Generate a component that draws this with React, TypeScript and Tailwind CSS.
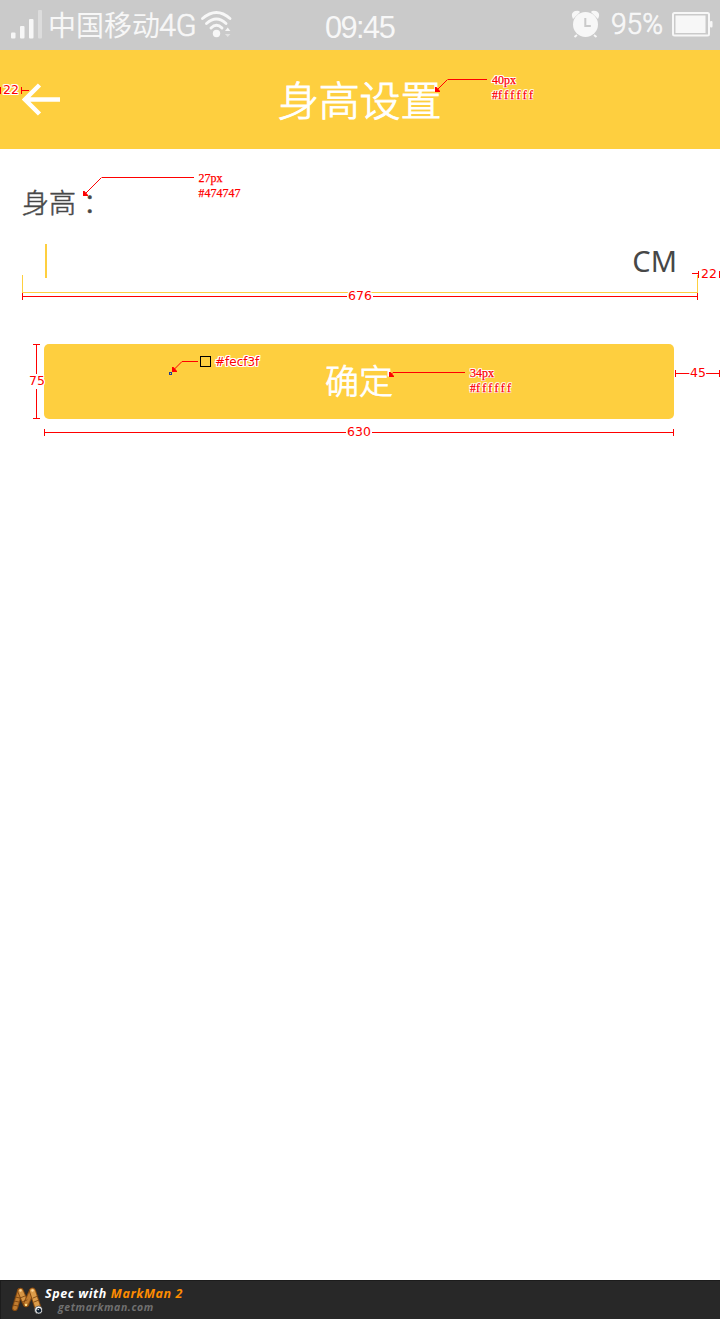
import type { ReactNode } from "react";

const CJK = "font-['Noto_Sans_CJK_SC',sans-serif]";
const HALO =
  "[text-shadow:1px_0_#fff,-1px_0_#fff,0_1px_#fff,0_-1px_#fff,1px_1px_#fff,-1px_-1px_#fff,1px_-1px_#fff,-1px_1px_#fff]";

function Measure({ className, children }: { className: string; children: ReactNode }) {
  return (
    <span className={`absolute whitespace-nowrap font-['DejaVu_Sans',sans-serif] leading-[14px] text-[#f00] ${HALO} ${className}`}>
      {children}
    </span>
  );
}

function FontNote({ className, size, color, colorClass = "" }: { className: string; size: string; color: string; colorClass?: string }) {
  return (
    <div className={`absolute whitespace-nowrap font-['Liberation_Serif',serif] text-[12px] leading-[15px] text-[#f00] [-webkit-text-stroke:0.25px_#f00] ${HALO} ${className}`}>
      <div>{size}</div>
      <div>
        #<span className={colorClass}>{color}</span>
      </div>
    </div>
  );
}

function StatusBar() {
  return (
    <div className="flex h-[50px] items-start bg-[#cacaca] text-[#f7f7f7]">
      <svg width="48" height="50" viewBox="0 0 48 50" fill="#f7f7f7">
        <rect x="11" y="32.500" width="4.500" height="6" rx="1" />
        <rect x="20" y="26" width="4.500" height="12.500" rx="1" />
        <rect x="29" y="19" width="4.500" height="19.500" rx="1" />
        <rect x="38" y="10" width="4" height="28.500" rx="1" fill="#dcdcdc" />
      </svg>
      <span className={`${CJK} w-[111px] whitespace-nowrap text-[28px] leading-[48px]`}>中国移动</span>
      <span className="w-[41px] origin-left scale-x-[0.95] font-['Roboto',sans-serif] text-[32px] font-light leading-[51px] [-webkit-text-stroke:0.7px_#f7f7f7]">4G</span>
      <svg width="34" height="50" viewBox="200 0 34 50" fill="none" stroke="#f7f7f7" strokeWidth="2.900" strokeLinecap="round">
        <path d="M202.500 18.500Q216.500 6.500 230 18.500M206.500 23.500Q216.500 14.500 226 23.500M211 28Q216.500 22.500 222 28" />
        <circle cx="216.500" cy="33.500" r="3.700" fill="#f7f7f7" stroke="none" />
        <path d="M225 31l2.700-3.500 2.700 3.500z" fill="#f7f7f7" stroke="none" />
        <path d="M225 34l2.700 3 2.700-3z" fill="#e2e2e2" stroke="none" />
      </svg>
      <span className="ml-[91px] w-[245px] origin-left scale-x-[0.96] font-['Liberation_Sans',sans-serif] text-[32px] leading-[54px] tracking-[-1.600px]">
        09:45
      </span>
      <svg width="30" height="50" viewBox="570 0 30 50">
        <path d="M573 19q-3-6 2-8 4-1 5 1zM598 19q3-6-2-8-4-1-5 1z" fill="#f7f7f7" />
        <circle cx="585.500" cy="24.500" r="12.500" fill="#f7f7f7" />
        <path d="M577 35l-2.500 2M594 35l2.500 2" stroke="#f7f7f7" strokeWidth="2" />
        <path d="M585.300 18v8h5.500" fill="none" stroke="#cacaca" strokeWidth="2" />
      </svg>
      <span className="ml-[11px] w-[60px] origin-left scale-x-[0.97] font-['Roboto',sans-serif] text-[29px] font-light leading-[49px] [-webkit-text-stroke:0.7px_#f7f7f7]">95%</span>
      <svg width="44" height="50" viewBox="671 0 44 50">
        <rect x="673" y="13" width="36" height="22.500" rx="1.500" fill="none" stroke="#f7f7f7" strokeWidth="2" />
        <rect x="675.500" y="15.500" width="30" height="17.500" fill="#f7f7f7" />
        <rect x="710" y="21" width="2.500" height="6.500" rx="1" fill="#f7f7f7" />
      </svg>
    </div>
  );
}

function Annotations() {
  return (
    <div className="pointer-events-none absolute inset-0">
      <svg className="absolute inset-0" width="720" height="450" viewBox="0 0 720 450" fill="none" stroke="#f00" strokeWidth="1">
        <g shapeRendering="crispEdges">
          <path d="M.5 87v7M21.500 87v7M22 90.500h7" />
          <path d="M447.500 79.500H487M101.500 177.500H194M692 273.500h6M698.500 271v7M719.500 271v7" />
          <path d="M22.500 293v7M697.500 293v7M23 296.500h324M373 296.500h325" />
          <path d="M33 344.500h7M33 418.500h7M36.500 345v29M36.500 389v29" />
          <path d="M44.500 429v7M673.500 429v7M45 432.500h301M372 432.500h301" />
          <path d="M675.500 370v7M719.500 370v7M676 373.500h14M706 373.500h13" />
          <path d="M393 372.500h72M182 361.500h16" />
        </g>
        <path d="M447.500 79.500L438 89M101.500 177.500L86 193M182 361.500L174 369.500M393 372.500l-2 2" />
        <g fill="#f00" stroke="none">
          <path d="M435 87h1.500l3.500 4v1h-5zM83 191h1.500l3.500 4v1h-5zM172 367h1.500l3.500 4v1h-5zM389 372h1.500l3.500 4v1h-5z" />
        </g>
        <rect x="169.500" y="372.500" width="2" height="2" stroke="#1e3c96" shapeRendering="crispEdges" />
        <rect x="200.500" y="356.500" width="10" height="10" stroke="#000" shapeRendering="crispEdges" />
      </svg>
      <Measure className="left-[3px] top-[83px] text-[12.500px]">22</Measure>
      <Measure className="left-[701px] top-[267px] text-[12.500px]">22</Measure>
      <Measure className="left-[348px] top-[289px] text-[12.500px]">676</Measure>
      <Measure className="left-[29px] top-[374px] text-[12.500px]">75</Measure>
      <Measure className="left-[347px] top-[425px] text-[12.500px]">630</Measure>
      <Measure className="left-[690px] top-[366px] text-[12.500px]">45</Measure>
      <Measure className="left-[215px] top-[355px] text-[12px]">#fecf3f</Measure>
      <FontNote className="left-[492px] top-[73px]" size="40px" color="ffffff" colorClass="tracking-[2.400px]" />
      <FontNote className="left-[198.500px] top-[171px]" size="27px" color="474747" />
      <FontNote className="left-[470px] top-[366px]" size="34px" color="ffffff" colorClass="tracking-[2.400px]" />
    </div>
  );
}

function MarkManLogo() {
  return (
    <svg width="34" height="39" viewBox="10 1281 34 39" fill="none" strokeLinecap="round">
      <path d="M15 1308L20 1291" stroke="#8a4c10" strokeWidth="6" />
      <path d="M15 1308L20 1291" stroke="#c07c30" strokeWidth="4" />
      <path d="M20.500 1291L26 1304" stroke="#8a4c10" strokeWidth="6.500" />
      <path d="M20.500 1291L26 1304" stroke="#d69645" strokeWidth="4.500" />
      <path d="M26 1304L32 1291" stroke="#8a4c10" strokeWidth="6" />
      <path d="M26 1304L32 1291" stroke="#c07c30" strokeWidth="4" />
      <path d="M32.500 1291L38 1308" stroke="#8a4c10" strokeWidth="7" />
      <path d="M32.500 1291L38 1308" stroke="#dc9d4b" strokeWidth="5" />
      <path d="M13 1305l5 1M14 1301l5 1M15 1297l5 1M20 1298l5-2M22 1302l5-2M33 1298l5-2M34 1302l5-2" stroke="#75400f" strokeWidth=".8" />
      <circle cx="20.500" cy="1290.500" r="1.200" fill="#ffd899" />
      <circle cx="32.500" cy="1290.500" r="1.200" fill="#ffd899" />
      <circle cx="26" cy="1305" r="1.200" fill="#ffe18a" />
      <circle cx="38.500" cy="1310" r="3.900" fill="#f5f5f5" stroke="#222" strokeWidth=".6" />
      <circle cx="38.800" cy="1310.400" r="2.400" fill="#102030" />
      <circle cx="38.200" cy="1309.600" r=".7" fill="#fff" />
    </svg>
  );
}

export default function App() {
  return (
    <div className="relative flex h-[1319px] w-[720px] flex-col overflow-hidden bg-white">
      <StatusBar />
      <header className="flex h-[99px] items-center bg-[#fecf3f]">
        <svg className="ml-[22px]" width="38" height="34" viewBox="0 0 38 34" fill="none" stroke="#fff" strokeWidth="4.500">
          <path d="M17.500 2L3 16.500 17.500 31M2 16.500h36" />
        </svg>
        <h1 className={`${CJK} ml-[218px] h-[99px] text-[41px] font-light leading-[96px] tracking-[-0.200px] text-white [-webkit-text-stroke:0.9px_#fff]`}>
          身高设置
        </h1>
      </header>
      <main className="flex flex-1 flex-col">
        <label className={`${CJK} ml-[22px] mt-[33px] h-[41px] text-[27px] font-light leading-[40px] text-[#474747] [-webkit-text-stroke:0.5px_#474747]`}>
          身高<span className="ml-[7px]">：</span>
        </label>
        <div className="mx-[22px] mt-[18px] flex h-[52px] items-start justify-between px-[22px]">
          <span className="ml-[1px] mt-[3px] h-[34px] w-[2px] bg-[#fecf3f]" />
          <span className="-mr-[1px] font-['Noto_Sans',sans-serif] text-[29px] leading-[39px] text-[#474747]">CM</span>
        </div>
        <div className="mx-[22px] -mt-[18px] h-[18px] border border-t-0 border-[#fecf3f]" />
        <button className={`${CJK} ml-[44px] mt-[51px] h-[75px] w-[630px] rounded-[5px] bg-[#fecf3f] pb-[3px] text-[34px] font-light leading-[72px] text-white [-webkit-text-stroke:0.8px_#fff]`}>
          确定
        </button>
      </main>
      <footer className="flex h-[39px] items-start border-l border-t border-[#1c1c1c] bg-[#282828] pl-[9px]">
        <MarkManLogo />
        <div className="font-['Open_Sans',sans-serif] font-bold italic">
          <div className="ml-[1px] mt-[5px] text-[12.500px] leading-[16px] tracking-[0.600px] text-white">
            Spec with <span className="text-[#ff8c00]">MarkMan 2</span>
          </div>
          <div className="ml-[14px] text-[10.500px] leading-[10px] tracking-[0.580px] text-[#707070]">getmarkman.com</div>
        </div>
      </footer>
      <Annotations />
    </div>
  );
}
